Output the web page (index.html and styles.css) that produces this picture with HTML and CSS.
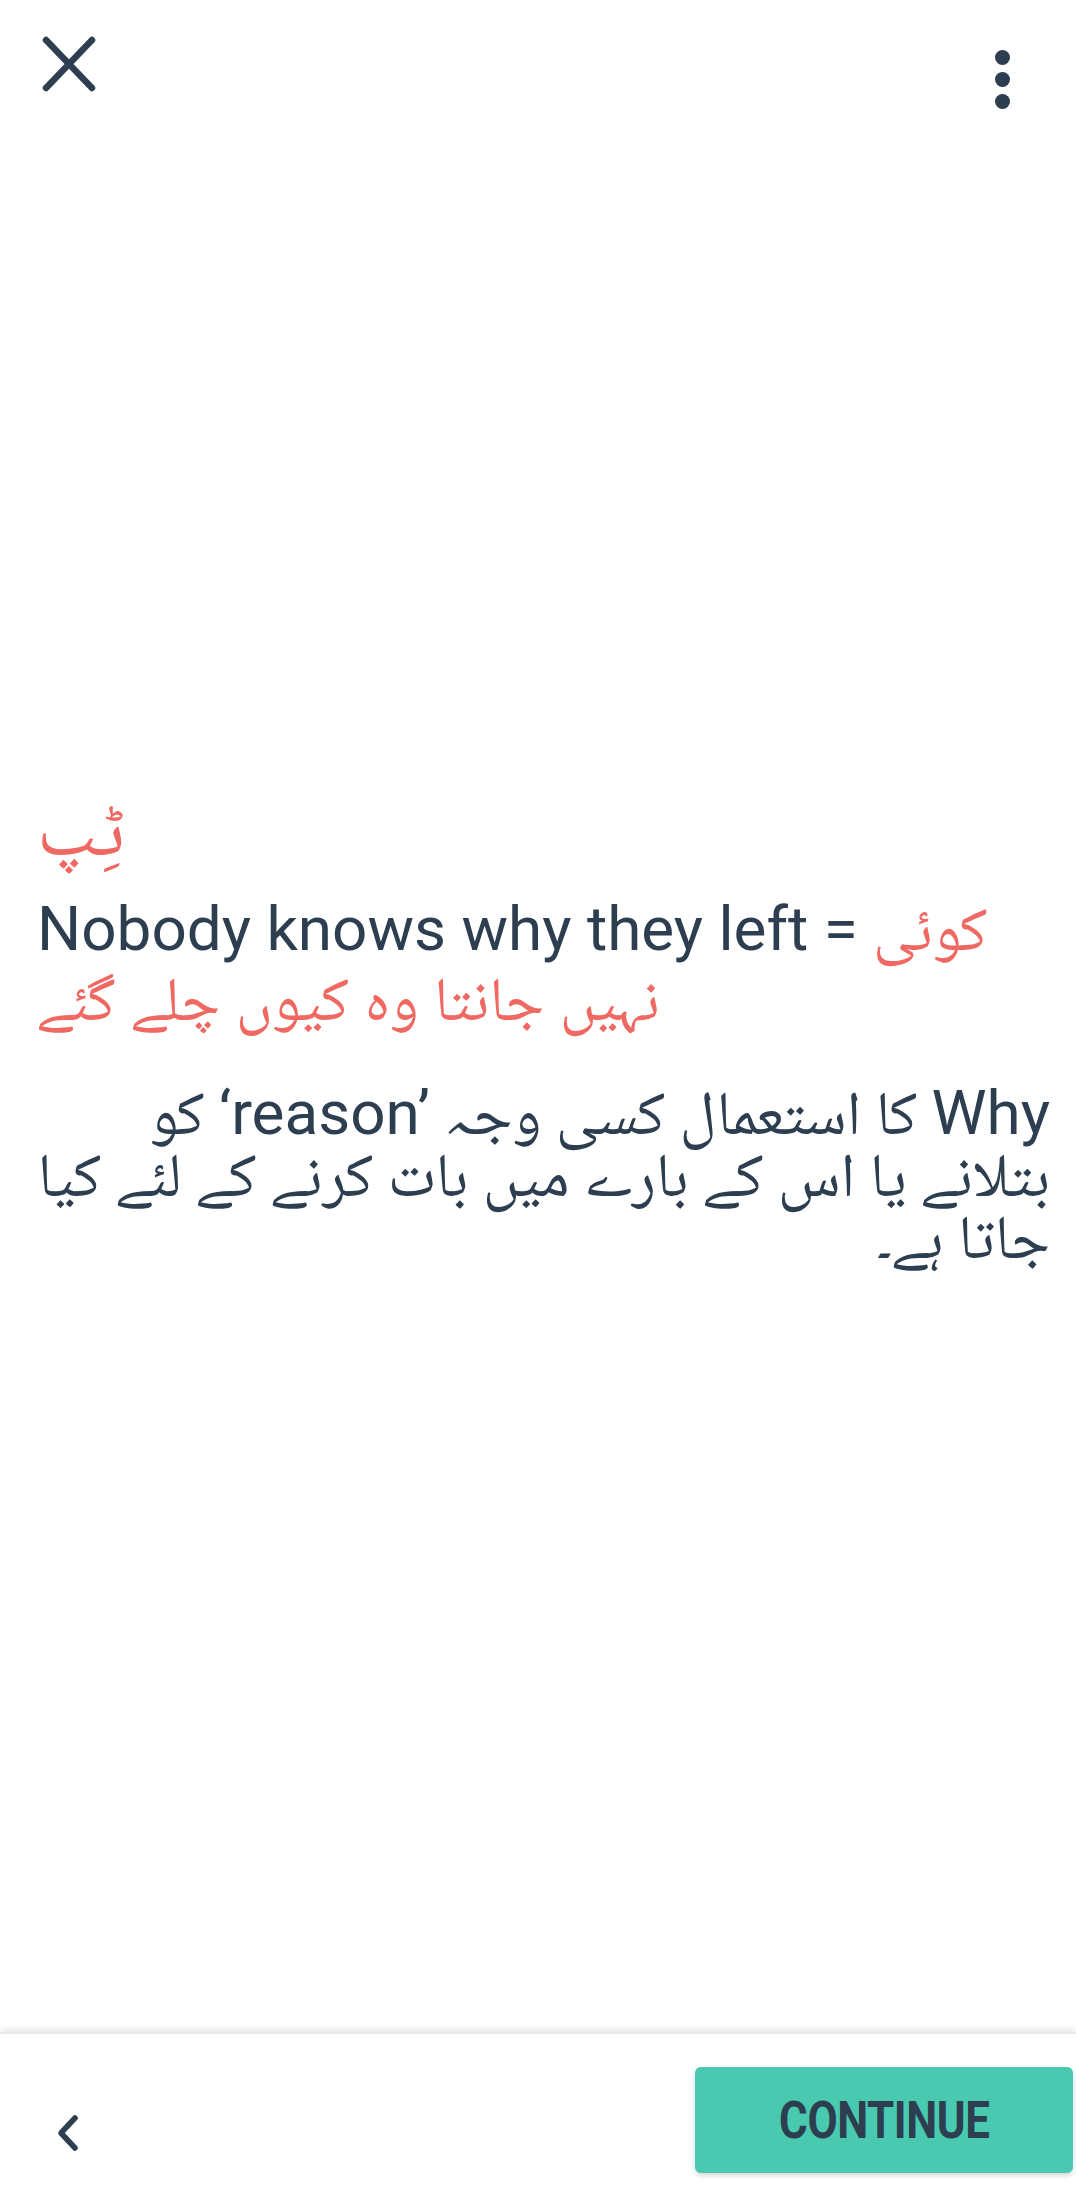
FILE: index.html
```html
<!DOCTYPE html>
<html lang="ur">
<head>
<meta charset="utf-8">
<title>Tip</title>
<link rel="stylesheet" href="styles.css">
</head>
<body>
<div class="screen">
  <header class="topbar">
    <button class="icon-btn close" aria-label="Close">
      <svg width="56" height="56" viewBox="0 0 56 56"><path d="M5 4 L51 52 M51 4 L5 52" stroke="#2c3e50" stroke-width="6.5" stroke-linecap="round" fill="none"/></svg>
    </button>
    <button class="icon-btn more" aria-label="More">
      <span class="dot"></span><span class="dot"></span><span class="dot"></span>
    </button>
  </header>

  <main class="content">
    <div class="tip-title" dir="rtl">ٹِپ</div>
    <p class="example"><span class="en">Nobody knows why they left = </span><span class="ur red" dir="rtl">کوئی نہیں جانتا وہ کیوں چلے گئے</span></p>
    <p class="explain" dir="rtl">Why کا استعمال کسی وجہ <bdi dir="ltr">‘reason’</bdi> کو بتلانے یا اس کے بارے میں بات کرنے کے لئے کیا جاتا ہے۔</p>
  </main>

  <footer class="bottombar">
    <button class="icon-btn back" aria-label="Back">
      <svg width="26" height="38" viewBox="0 0 26 38"><path d="M20 4 L6 19 L20 34" stroke="#2c3e50" stroke-width="5.5" stroke-linecap="round" stroke-linejoin="round" fill="none"/></svg>
    </button>
    <button class="continue"><span class="continue-label">CONTINUE</span></button>
  </footer>
</div>
</body>
</html>
```

FILE: styles.css
```css
* { box-sizing: border-box; }
html, body { margin: 0; padding: 0; background: #ffffff; }
body {
  font-family: Roboto, "Noto Naskh Arabic", "Noto Sans Arabic", "DejaVu Sans", sans-serif;
  color: #2c3e50;
}
.screen {
  width: 1076px;
  height: 2204px;
  display: flex;
  flex-direction: column;
  background: #fff;
}
.icon-btn {
  border: 0;
  background: transparent;
  padding: 0;
  margin: 0;
  cursor: pointer;
  display: flex;
  align-items: center;
  justify-content: center;
}
.topbar {
  height: 140px;
  display: flex;
  justify-content: space-between;
  align-items: flex-start;
  padding: 36px 66px 0 41px;
}
.close { width: 56px; height: 56px; }
.more {
  flex-direction: column;
  gap: 7px;
  padding-top: 14px;
}
.dot {
  width: 15px;
  height: 15px;
  border-radius: 50%;
  background: #2c3e50;
}
.content {
  flex: 1;
  padding: 644px 26px 0 37px;
}
.tip-title {
  direction: ltr;
  font-size: 76px;
  line-height: 90px;
  color: #ef6862;
  width: max-content;
}
.example {
  margin: 20px 0 0 0;
  font-size: 62px;
  line-height: 70px;
}
.red { color: #ef6862; }
.explain {
  margin: 48px 0 0 0;
  font-size: 62px;
  line-height: 62px;
  text-align: right;
  word-spacing: -1px;
}
.bottombar {
  height: 172px;
  display: flex;
  justify-content: space-between;
  align-items: center;
  padding: 0 3px 0 55px;
  box-shadow: 0 -3px 6px rgba(0,0,0,0.09);
  border-top: 2px solid #e8e8e8;
}
.back { width: 26px; height: 38px; margin-top: 28px; }
.continue {
  width: 378px;
  height: 106px;
  border: 0;
  border-radius: 6px;
  background: #49c9b0;
  color: #2c3e50;
  font-family: Roboto, sans-serif;
  font-weight: 700;
  font-size: 51px;
  box-shadow: 0 3px 4px rgba(0,0,0,0.15);
  margin-top: 2px;
  display: flex;
  align-items: center;
  justify-content: center;
}
.continue-label {
  display: inline-block;
  letter-spacing: -0.5px;
  transform: scaleX(0.86);
}
```
